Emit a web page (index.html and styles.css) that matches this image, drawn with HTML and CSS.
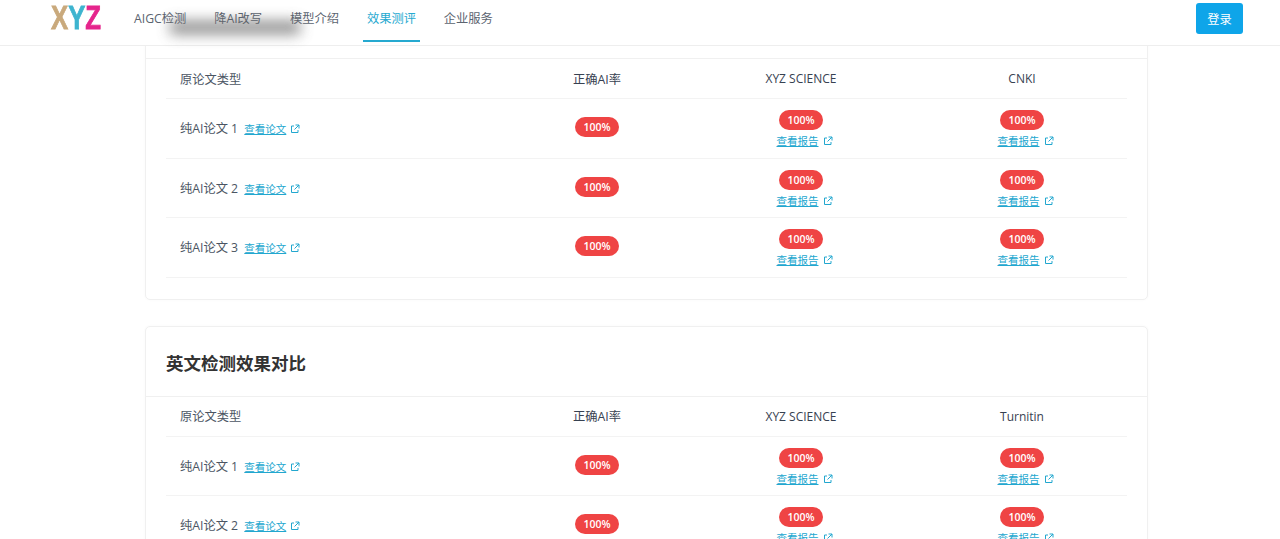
FILE: index.html
```html
<!DOCTYPE html>
<html lang="zh-CN">
<head>
  <meta charset="UTF-8" />
  <meta name="viewport" content="width=device-width, initial-scale=1.0"/>
  <title>效果测评</title>
  <link rel="stylesheet" href="styles.css">
</head>
<body>

  <header class="topbar">
    <div class="logo"><div class="logo-text"><span class="logo-x">X</span><span class="logo-y">Y</span><span class="logo-z">Z</span></div></div>
    <nav class="nav">
      <a href="#">AIGC检测</a>
      <a href="#">降AI改写</a>
      <a href="#">模型介绍</a>
      <a href="#" class="active">效果测评</a>
      <a href="#">企业服务</a>
    </nav>
    <div class="smudge"></div>
    <button class="login">登录</button>
  </header>

  <main class="content">

    <section class="card">
      <h2>中文检测效果对比</h2>
      <div class="table">
        <div class="row head">
          <div class="first">原论文类型</div>
          <div>正确AI率</div>
          <div class="brand">XYZ SCIENCE</div>
          <div class="brand">CNKI</div>
        </div>
        <div class="row">
          <div class="first">纯AI论文 1 <a href="#" class="link">查看论文<svg class="ext" viewBox="0 0 10 10"><path d="M8 6v2.5H1.5V2H4M5.5 1H9v3.5M9 1L4.5 5.5"/></svg></a></div>
          <div class="rate"><span class="badge">100%</span></div>
          <div class="stack"><span class="badge">100%</span><a href="#" class="link">查看报告<svg class="ext" viewBox="0 0 10 10"><path d="M8 6v2.5H1.5V2H4M5.5 1H9v3.5M9 1L4.5 5.5"/></svg></a></div>
          <div class="stack"><span class="badge">100%</span><a href="#" class="link">查看报告<svg class="ext" viewBox="0 0 10 10"><path d="M8 6v2.5H1.5V2H4M5.5 1H9v3.5M9 1L4.5 5.5"/></svg></a></div>
        </div>
        <div class="row">
          <div class="first">纯AI论文 2 <a href="#" class="link">查看论文<svg class="ext" viewBox="0 0 10 10"><path d="M8 6v2.5H1.5V2H4M5.5 1H9v3.5M9 1L4.5 5.5"/></svg></a></div>
          <div class="rate"><span class="badge">100%</span></div>
          <div class="stack"><span class="badge">100%</span><a href="#" class="link">查看报告<svg class="ext" viewBox="0 0 10 10"><path d="M8 6v2.5H1.5V2H4M5.5 1H9v3.5M9 1L4.5 5.5"/></svg></a></div>
          <div class="stack"><span class="badge">100%</span><a href="#" class="link">查看报告<svg class="ext" viewBox="0 0 10 10"><path d="M8 6v2.5H1.5V2H4M5.5 1H9v3.5M9 1L4.5 5.5"/></svg></a></div>
        </div>
        <div class="row">
          <div class="first">纯AI论文 3 <a href="#" class="link">查看论文<svg class="ext" viewBox="0 0 10 10"><path d="M8 6v2.5H1.5V2H4M5.5 1H9v3.5M9 1L4.5 5.5"/></svg></a></div>
          <div class="rate"><span class="badge">100%</span></div>
          <div class="stack"><span class="badge">100%</span><a href="#" class="link">查看报告<svg class="ext" viewBox="0 0 10 10"><path d="M8 6v2.5H1.5V2H4M5.5 1H9v3.5M9 1L4.5 5.5"/></svg></a></div>
          <div class="stack"><span class="badge">100%</span><a href="#" class="link">查看报告<svg class="ext" viewBox="0 0 10 10"><path d="M8 6v2.5H1.5V2H4M5.5 1H9v3.5M9 1L4.5 5.5"/></svg></a></div>
        </div>
      </div>
    </section>

    <section class="card">
      <h2>英文检测效果对比</h2>
      <div class="table">
        <div class="row head">
          <div class="first">原论文类型</div>
          <div>正确AI率</div>
          <div class="brand">XYZ SCIENCE</div>
          <div class="brand">Turnitin</div>
        </div>
        <div class="row">
          <div class="first">纯AI论文 1 <a href="#" class="link">查看论文<svg class="ext" viewBox="0 0 10 10"><path d="M8 6v2.5H1.5V2H4M5.5 1H9v3.5M9 1L4.5 5.5"/></svg></a></div>
          <div class="rate"><span class="badge">100%</span></div>
          <div class="stack"><span class="badge">100%</span><a href="#" class="link">查看报告<svg class="ext" viewBox="0 0 10 10"><path d="M8 6v2.5H1.5V2H4M5.5 1H9v3.5M9 1L4.5 5.5"/></svg></a></div>
          <div class="stack"><span class="badge">100%</span><a href="#" class="link">查看报告<svg class="ext" viewBox="0 0 10 10"><path d="M8 6v2.5H1.5V2H4M5.5 1H9v3.5M9 1L4.5 5.5"/></svg></a></div>
        </div>
        <div class="row">
          <div class="first">纯AI论文 2 <a href="#" class="link">查看论文<svg class="ext" viewBox="0 0 10 10"><path d="M8 6v2.5H1.5V2H4M5.5 1H9v3.5M9 1L4.5 5.5"/></svg></a></div>
          <div class="rate"><span class="badge">100%</span></div>
          <div class="stack"><span class="badge">100%</span><a href="#" class="link">查看报告<svg class="ext" viewBox="0 0 10 10"><path d="M8 6v2.5H1.5V2H4M5.5 1H9v3.5M9 1L4.5 5.5"/></svg></a></div>
          <div class="stack"><span class="badge">100%</span><a href="#" class="link">查看报告<svg class="ext" viewBox="0 0 10 10"><path d="M8 6v2.5H1.5V2H4M5.5 1H9v3.5M9 1L4.5 5.5"/></svg></a></div>
        </div>
      </div>
    </section>

  </main>

</body>
</html>
```

FILE: styles.css
```css
html, body {
  height: 539px;
  overflow: hidden;
}
body {
  margin: 0;
  background-color: #fff;
  color: #4b5563;
  font-family: "Open Sans", "Noto Sans CJK SC", sans-serif;
  font-size: 12.25px;
}
a {
  text-decoration: none;
  color: inherit;
}

.topbar {
  position: fixed;
  top: 0;
  left: 0;
  right: 0;
  z-index: 10;
  height: 46px;
  box-sizing: border-box;
  display: flex;
  align-items: flex-start;
  padding: 0 37px 0 51px;
  background: #fff;
  border-bottom: 1px solid #eeeeee;
}
.logo {
  width: 50px;
  margin-top: 3px;
}
.logo-text {
  font-family: "Liberation Sans", sans-serif;
  font-size: 33px;
  font-weight: bold;
  line-height: 30px;
  -webkit-text-stroke: 0.8px;
  white-space: nowrap;
  transform: scaleX(0.78);
  transform-origin: left center;
}
.logo-x { color: #c9a97c; }
.logo-y { color: #3db4cf; }
.logo-z { color: #e5258c; }
.nav {
  display: flex;
  gap: 19.9px;
  margin-left: 29px;
}
.nav a {
  padding: 0 4px;
  height: 42px;
  line-height: 37px;
  box-sizing: border-box;
  color: #5b6470;
}
.nav a.active {
  color: #26a9d0;
  border-bottom: 2px solid #26a9d0;
}
.smudge {
  position: absolute;
  left: 170px;
  top: 21px;
  width: 130px;
  height: 13px;
  background: #666;
  opacity: 0.75;
  filter: blur(7px);
  pointer-events: none;
}
.login {
  margin-left: auto;
  margin-top: 3px;
  width: 47px;
  height: 31px;
  border: none;
  border-radius: 3px;
  background-color: #0ea5e9;
  color: #fff;
  font-family: inherit;
  font-size: 12.25px;
}

.content {
  width: 1003px;
  margin: -12px auto 0 145px;
  display: flex;
  flex-direction: column;
  gap: 26px;
}
.card {
  border: 1px solid #f0f0f0;
  border-radius: 5px;
  padding-bottom: 21px;
  box-shadow: 0 0 3px rgba(0,0,0,0.03);
}
.card h2 {
  margin: 0;
  height: 70px;
  line-height: 73px;
  padding-left: 20px;
  box-sizing: border-box;
  border-bottom: 1px solid #f0f0f0;
  font-size: 17.5px;
  font-weight: bold;
  color: #333;
}
.table {
  margin: 0 20px;
}
.row {
  display: grid;
  grid-template-columns: 343px 176px 232px 210px;
  align-items: center;
  height: 59.5px;
  box-sizing: border-box;
  border-bottom: 1px solid #f3f3f3;
  text-align: center;
}
.row.head {
  height: 40px;
}
.first {
  text-align: left;
  padding-left: 14px;
}
.head .first {
  color: #4b5563;
}
.head div {
  color: #374151;
}
.brand {
  font-weight: 500;
  font-size: 12px;
}
.rate {
  padding-bottom: 2px;
}
.badge {
  display: inline-block;
  width: 44px;
  height: 20px;
  line-height: 20px;
  border-radius: 10px;
  background-color: #ef4444;
  color: #fff;
  font-size: 10.5px;
  font-weight: 600;
  text-align: center;
}
.stack {
  display: flex;
  flex-direction: column;
  align-items: center;
  gap: 4px;
  padding-top: 2px;
}
.link {
  color: #22a7cf;
  font-size: 10.5px;
  line-height: 14px;
  text-decoration: underline;
}
.stack .link {
  margin-left: 7px;
}
.first .link {
  margin-left: 3px;
}
.ext {
  width: 10px;
  height: 10px;
  margin-left: 4px;
  vertical-align: -1px;
  fill: none;
  stroke: #22a7cf;
  stroke-width: 1;
}
```
